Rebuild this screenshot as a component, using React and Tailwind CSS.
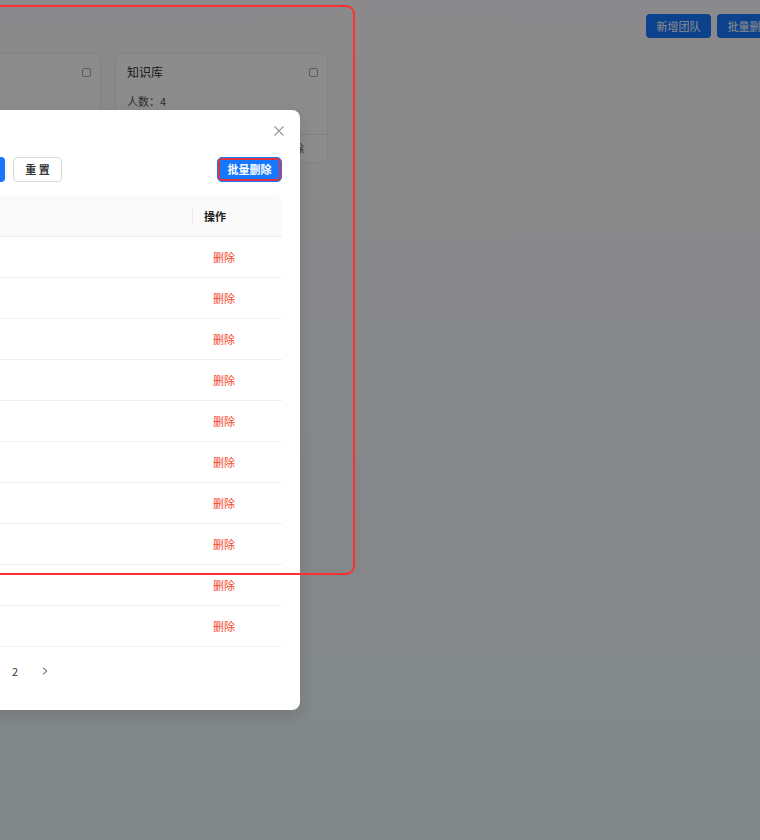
import React from "react";

const rows = [
  ["张伟", "zhangwei"],
  ["李娜", "lina"],
  ["王芳", "wangfang"],
  ["刘洋", "liuyang"],
  ["陈静", "chenjing"],
  ["杨磊", "yanglei"],
  ["赵敏", "zhaomin"],
  ["黄强", "huangqiang"],
  ["周杰", "zhoujie"],
  ["吴婷", "wuting"],
];

function Checkbox() {
  return <span className="block h-[9px] w-[9px] rounded-[2px] border border-[#a6a6a6] bg-white" />;
}

function Card({ title, children, footer }) {
  return (
    <div className="flex h-[110px] w-[213px] shrink-0 flex-col rounded-[6px] border border-[#ededed] bg-white">
      <div className="px-[11px] pr-[9px] pt-[9px]">
        <div className="flex h-[18px] items-center justify-between">
          <span className="text-[12px] leading-[18px] text-[#333]">{title}</span>
          <Checkbox />
        </div>
        {children}
      </div>
      <div className="mt-auto flex h-[28px] items-center justify-end border-t border-[#ededed] pr-[23px] text-[11px] text-[#555]">
        {footer}
      </div>
    </div>
  );
}

export default function App() {
  return (
    <div className="relative h-[840px] w-[760px] overflow-hidden bg-gradient-to-b from-[#fdf9fd] to-[#ebf7f9] font-['Noto_Sans_CJK_SC','Noto_Sans',sans-serif]">
      {/* page header actions */}
      <div className="mr-[-22px] flex justify-end gap-[6px] pt-[14px]">
        <button className="h-[24px] w-[65px] rounded-[4px] bg-[#1677ff] text-[11px] text-white">新增团队</button>
        <button className="h-[24px] w-[65px] rounded-[4px] bg-[#1677ff] text-[11px] text-white">批量删除</button>
      </div>

      {/* team cards */}
      <div className="-ml-[112px] mt-[15px] flex gap-[14px]">
        <Card title="研发团队" footer="删除">
          <div className="mt-[4px] pr-[96px] text-right text-[11px] leading-[16px] text-[#555]">共 12 人</div>
        </Card>
        <Card title="知识库" footer="删除">
          <div className="mt-[12px] text-[11px] leading-[16px] text-[#555]">人数：4</div>
        </Card>
      </div>

      {/* mask */}
      <div className="absolute inset-0 bg-black/45" />

      {/* modal */}
      <div className="absolute left-[-320px] top-[110px] h-[600px] w-[620px] rounded-[8px] bg-white px-[18px] pt-[10px] shadow-[0_6px_16px_rgba(0,0,0,0.12)]">
        <div className="flex h-[22px] items-center justify-between">
          <span className="text-[14px] font-semibold text-[#1f1f1f]">团队成员</span>
          <svg className="mr-[-2px]" width="10" height="10" viewBox="0 0 10 10">
            <path d="M0.5 0.5 L9.5 9.5 M9.5 0.5 L0.5 9.5" stroke="#999" strokeWidth="1.1" />
          </svg>
        </div>

        <div className="mt-[15px] flex h-[25px] items-center justify-between">
          <div className="flex items-center gap-[8px]">
            <span className="w-[55px] text-[11px] text-[#333]">成员名称：</span>
            <span className="h-[25px] w-[187px] rounded-[4px] border border-[#d9d9d9]" />
            <button className="h-[25px] w-[49px] rounded-[4px] bg-[#1677ff] text-[11px] font-medium text-white">查 询</button>
            <button className="h-[25px] w-[49px] rounded-[4px] border border-[#d9d9d9] bg-white text-[11px] font-semibold text-[#333]">重 置</button>
          </div>
          <button className="h-[25px] w-[65px] rounded-[5px] border border-[#1677ff] bg-[#1677ff] text-[11px] font-semibold text-white shadow-[inset_0_0_0_2px_#e3323f]">
            批量删除
          </button>
        </div>

        <div className="mt-[14px]">
          <div className="flex h-[41px] items-center rounded-t-[6px] border-b border-[#f0f0f0] bg-[#fafafa] text-[11px] font-semibold text-[#1f1f1f]">
            <div className="w-[152px] pl-[12px]">姓名</div>
            <div className="flex-1 pl-[12px]">账号</div>
            <div className="flex w-[90px] items-center">
              <span className="h-[17px] w-px bg-[#ececec]" />
              <span className="ml-[11px]">操作</span>
            </div>
          </div>
          {rows.map(([name, acc]) => (
            <div key={acc} className="flex h-[41px] items-center border-b border-[#f0f0f0] text-[11px] text-[#333]">
              <div className="w-[152px] pl-[12px]">{name}</div>
              <div className="flex-1 pl-[12px]">{acc}</div>
              <div className="w-[90px] pl-[21px] text-[#f5461f]">删除</div>
            </div>
          ))}
        </div>

        <div className="mt-[12px] flex h-[24px] items-center gap-[6px] pl-[245px] text-[11px] text-[#333]">
          <span className="flex h-[24px] w-[24px] items-center justify-center text-[#999]">&lt;</span>
          <span className="flex h-[24px] w-[24px] items-center justify-center rounded-[4px] border border-[#1677ff] text-[#1677ff]">1</span>
          <span className="flex h-[24px] w-[24px] items-center justify-center">2</span>
          <span className="flex h-[24px] w-[24px] items-center justify-center">
            <svg width="6" height="8" viewBox="0 0 6 8">
              <path d="M1 0.8 L4.8 4 L1 7.2" fill="none" stroke="#444" strokeWidth="1" />
            </svg>
          </span>
        </div>
      </div>

      {/* highlight outline */}
      <div className="pointer-events-none absolute left-[-10px] top-[5px] h-[570px] w-[365px] rounded-[9px] border-2 border-[#ff3030]" />
    </div>
  );
}
